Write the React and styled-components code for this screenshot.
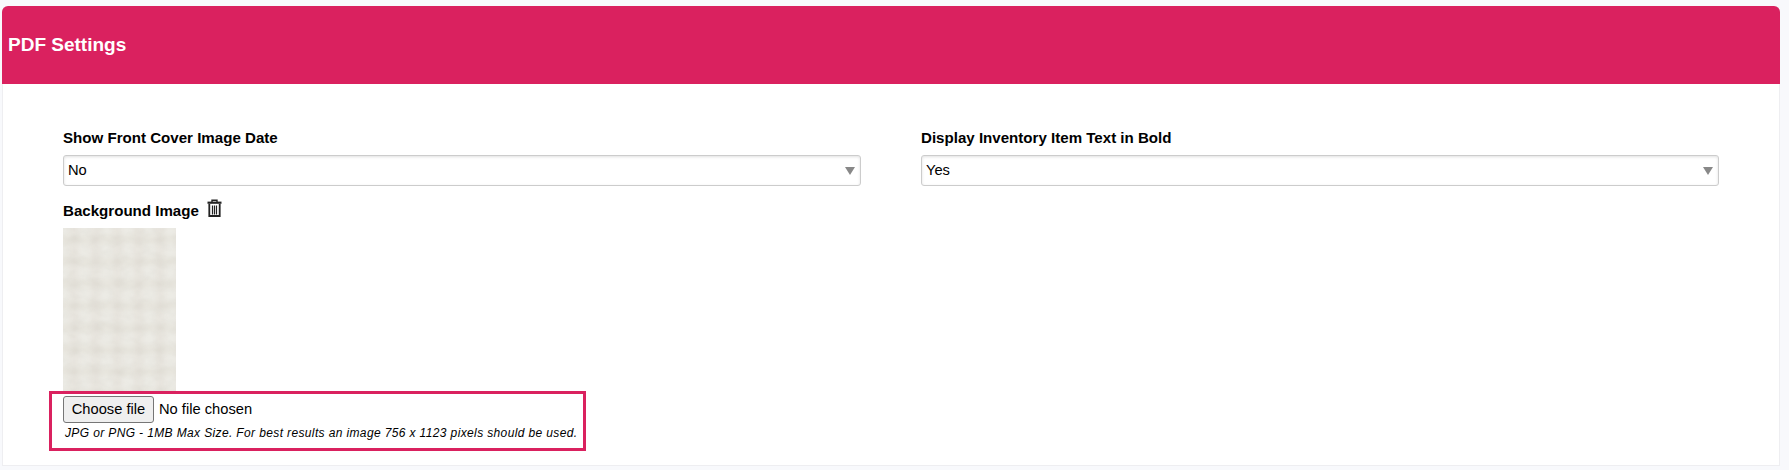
import React from 'react';
import styled, { createGlobalStyle } from 'styled-components';

const GlobalStyle = createGlobalStyle`
  html, body {
    margin: 0;
    padding: 0;
    background: #f8f9fc;
    font-family: "Liberation Sans", Arial, sans-serif;
    color: #000;
  }
`;

const Page = styled.div`
  height: 470px;
  box-sizing: border-box;
  padding: 6px 9px 4px 2px;
  overflow: hidden;
`;

const Card = styled.div`
  height: 460px;
  box-sizing: border-box;
  background: #fff;
  border: 1px solid #eeeef1;
  border-top: none;
  border-radius: 6px 6px 0 0;
`;

const Header = styled.div`
  height: 78px;
  margin: 0 -1px;
  display: flex;
  align-items: center;
  padding-left: 6px;
  background: #da215f;
  border-radius: 6px 6px 0 0;
  color: #fff;
  font-size: 19px;
  font-weight: 700;
`;

const Body = styled.div`
  padding: 45px 60px 0;
`;

const Row = styled.div`
  display: grid;
  grid-template-columns: 798px 798px;
  column-gap: 60px;
`;

const Label = styled.label`
  display: block;
  height: 17px;
  line-height: 17px;
  margin-bottom: 9px;
  font-size: 15.1px;
  font-weight: 700;
`;

const SelectWrap = styled.div`
  position: relative;
  height: 31px;

  &::after {
    content: '';
    position: absolute;
    right: 6px;
    top: 12px;
    border-left: 5px solid transparent;
    border-right: 5px solid transparent;
    border-top: 8px solid #888;
    pointer-events: none;
  }
`;

const Select = styled.select`
  appearance: none;
  display: block;
  width: 100%;
  height: 100%;
  box-sizing: border-box;
  padding: 0 4px 2px;
  background: #fff;
  border: 1px solid #ccc;
  border-radius: 3px;
  box-shadow: inset 0 1px 3px rgba(0, 0, 0, 0.12);
  font-family: inherit;
  font-size: 14.7px;
  color: #000;
`;

const ImageHead = styled.div`
  display: flex;
  align-items: center;
  gap: 8px;
  height: 19px;
  margin-top: 15px;
  margin-bottom: 8px;
  font-size: 15.1px;
  font-weight: 700;
`;

const TrashIcon = styled.svg`
  flex: none;
  width: 15px;
  height: 18px;
  margin-top: -6px;
  color: #222;
`;

const Texture = styled.svg`
  display: block;
  width: 113px;
  height: 165px;
`;

const Highlight = styled.div`
  box-sizing: border-box;
  width: 537px;
  height: 60px;
  margin: -2px 0 0 -14px;
  position: relative;
  padding: 2px 0 0 11px;
  border: 3px solid #da215f;
`;

const FilePicker = styled.div`
  display: flex;
  align-items: center;
  gap: 5px;
  height: 27px;
  padding-bottom: 1px;
  box-sizing: border-box;
  font-size: 14.7px;
`;

const FileButton = styled.button`
  flex: none;
  width: 91px;
  height: 27px;
  margin-bottom: -1px;
  padding: 0 0 2px;
  font-family: inherit;
  font-size: 14.7px;
  background: #efefef;
  border: 1px solid #767676;
  border-radius: 3px;
  color: #000;
`;

const Hint = styled.div`
  margin: 3px 0 0 2px;
  font-size: 12px;
  letter-spacing: 0.37px;
  font-style: italic;
  line-height: 14px;
  white-space: nowrap;
`;

const Trash = () => (
  <TrashIcon viewBox="0 0 15 18" fill="none" stroke="currentColor">
    <path d="M5 3V1.2h5V3" strokeWidth="1.4" />
    <path d="M0.5 3.7h14" strokeWidth="2.2" />
    <path d="M2.3 5v12h10.4V5" strokeWidth="1.8" />
    <path d="M5.5 6.5v9M7.5 6.5v9M9.5 6.5v9" strokeWidth="1.2" />
  </TrashIcon>
);

const ClothTexture = () => (
  <Texture viewBox="0 0 113 165" preserveAspectRatio="none">
    <defs>
      <pattern id="weave" width="21.5" height="22" patternUnits="userSpaceOnUse">
        <rect width="21.5" height="22" fill="#ecebe5" />
        <rect x="6" y="0" width="10" height="22" fill="#e8e5df" />
        <rect x="0" y="7" width="21.5" height="9" fill="#e7e5de" />
        <rect x="7" y="8" width="9" height="7" fill="#e0ddd5" />
      </pattern>
      <filter id="soft">
        <feGaussianBlur stdDeviation="2.5" />
      </filter>
      <filter id="grain">
        <feTurbulence type="fractalNoise" baseFrequency="0.09 0.14" numOctaves="2" seed="7" />
        <feColorMatrix values="0 0 0 0 0.6  0 0 0 0 0.58  0 0 0 0 0.52  0.9 0 0 0 -0.32" />
      </filter>
    </defs>
    <rect width="113" height="165" fill="#e9e7e1" />
    <rect x="-10" y="-10" width="133" height="185" fill="url(#weave)" filter="url(#soft)" />
    <rect width="113" height="165" filter="url(#grain)" opacity="0.35" />
  </Texture>
);

const SettingSelect = ({ label, value }) => (
  <div>
    <Label>{label}</Label>
    <SelectWrap>
      <Select defaultValue={value}>
        <option>No</option>
        <option>Yes</option>
      </Select>
    </SelectWrap>
  </div>
);

const App = () => (
  <Page>
    <GlobalStyle />
    <Card>
      <Header>PDF Settings</Header>
      <Body>
        <Row>
          <SettingSelect label="Show Front Cover Image Date" value="No" />
          <SettingSelect label="Display Inventory Item Text in Bold" value="Yes" />
        </Row>
        <ImageHead>
          Background Image
          <Trash />
        </ImageHead>
        <ClothTexture />
        <Highlight>
          <FilePicker>
            <FileButton type="button">Choose file</FileButton>
            No file chosen
          </FilePicker>
          <Hint>JPG or PNG - 1MB Max Size. For best results an image 756 x 1123 pixels should be used.</Hint>
        </Highlight>
      </Body>
    </Card>
  </Page>
);

export default App;
